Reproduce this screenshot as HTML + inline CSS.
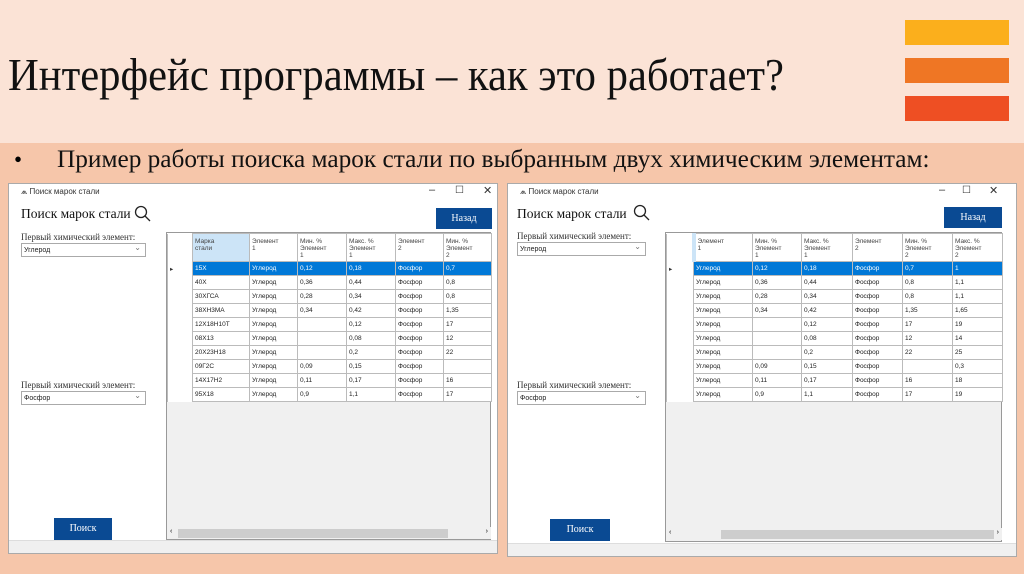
<!DOCTYPE html>
<html><head><meta charset="utf-8">
<style>
*{margin:0;padding:0;box-sizing:border-box}
body{width:1024px;height:574px;overflow:hidden;background:#F6C6AA;position:relative;font-family:"Liberation Sans",sans-serif}
.top{position:absolute;left:0;top:0;width:1024px;height:143px;background:#FBE3D6}
.bar{position:absolute;left:905px;width:104px;height:25px}
.h1{position:absolute;left:8px;top:48px;font-family:"Liberation Serif",serif;font-size:46px;white-space:nowrap;transform-origin:0 0;transform:scaleX(0.927);color:#111}
.sub{position:absolute;left:57px;top:145px;font-family:"Liberation Serif",serif;font-size:25.3px;white-space:nowrap;color:#111}
.bul{position:absolute;left:14px;top:147px;font-family:"Liberation Serif",serif;font-size:23px}
.win{position:absolute;background:#fff;border:1px solid #aaa}
.tt{position:absolute;left:12px;top:3px;font-size:8px;color:#333}
.ctl{position:absolute;top:0px;font-size:11px;color:#333}
.ttl{position:absolute;font-family:"Liberation Serif",serif;font-size:13.5px;color:#111}
.btn{position:absolute;background:#0A4A93;color:#fff;font-family:"Liberation Serif",serif;font-size:10px;text-align:center}
.lbl{position:absolute;font-family:"Liberation Serif",serif;font-size:9px;color:#333}
.cmb{position:absolute;height:14px;border:1px solid #aaa;font-size:7px;padding:3px 2px;color:#222;background:#fff}
.cmb:after{content:"⌄";position:absolute;right:4px;top:-1px;font-size:8px;color:#777}
.grid{position:absolute;background:#F0F0F0;border:1px solid #999}
table{border-collapse:collapse;table-layout:fixed;position:absolute;left:0;top:0;font-size:6.5px;color:#222;background:#fff}
td{border:1px solid #bbb;height:14px;padding:0 2px;white-space:nowrap;overflow:hidden}
tr.hd td{height:28px;vertical-align:top;padding-top:4px;line-height:7px;color:#444}
tr.sel td{background:#0078D7;color:#fff}
td.rh{background:#fff;border-top:none;border-bottom:none;color:#333}
tr.sel td.rh{background:#fff;color:#333}
.hs{position:absolute;height:12px;background:#F0F0F0}
.thumb{position:absolute;top:2px;height:9px;background:#CDCDCD}
.status{position:absolute;left:0;bottom:0;height:13px;background:#F0F0F0;border-top:1px solid #ddd}
</style></head><body>
<div class="top"></div>
<div class="bar" style="top:20px;background:#FBAF1C"></div>
<div class="bar" style="top:58px;background:#EF7624"></div>
<div class="bar" style="top:96px;background:#EE4F23"></div>
<div class="h1">Интерфейс программы – как это работает?</div>
<div class="bul">•</div>
<div class="sub">Пример работы поиска марок стали по выбранным двух химическим элементам:</div>

<!-- Window 1 -->
<div class="win" style="left:8px;top:183px;width:490px;height:371px">
  <div class="tt">⩕ Поиск марок стали</div>
  <div class="ctl" style="left:420px">–</div>
  <div class="ctl" style="left:446px;top:1px;font-size:10px">☐</div>
  <div class="ctl" style="left:474px">✕</div>
  <div class="ttl" style="left:12px;top:22px">Поиск марок стали</div>
  <svg style="position:absolute;left:125px;top:21px" width="18" height="18"><circle cx="7" cy="7" r="5.5" fill="none" stroke="#222" stroke-width="1.3"/><line x1="11" y1="11" x2="16" y2="16" stroke="#222" stroke-width="1.3"/></svg>
  <div class="btn" style="left:427px;top:24px;width:56px;height:21px;line-height:21px">Назад</div>
  <div class="lbl" style="left:12px;top:48px">Первый химический элемент:</div>
  <div class="cmb" style="left:12px;top:59px;width:125px">Углерод</div>
  <div class="lbl" style="left:12px;top:196px">Первый химический элемент:</div>
  <div class="cmb" style="left:12px;top:207px;width:125px">Фосфор</div>
  <div class="btn" style="left:45px;top:334px;width:58px;height:22px;line-height:22px">Поиск</div>
  <div class="grid" style="left:157px;top:48px;width:325px;height:308px">
    <table style="width:324px">
      <colgroup><col style="width:25px"><col style="width:57px"><col style="width:48px"><col style="width:49px"><col style="width:49px"><col style="width:48px"><col style="width:48px"></colgroup>
      <tr class="hd"><td class="rh"></td><td style="background:#CCE4F7">Марка<br>стали</td><td>Элемент<br>1</td><td>Мин. %<br>Элемент<br>1</td><td>Макс. %<br>Элемент<br>1</td><td>Элемент<br>2</td><td>Мин. %<br>Элемент<br>2</td></tr>
      <tr class="sel"><td class="rh">▸</td><td>15Х</td><td>Углерод</td><td>0,12</td><td>0,18</td><td>Фосфор</td><td>0,7</td></tr>
      <tr><td class="rh"></td><td>40Х</td><td>Углерод</td><td>0,36</td><td>0,44</td><td>Фосфор</td><td>0,8</td></tr>
      <tr><td class="rh"></td><td>30ХГСА</td><td>Углерод</td><td>0,28</td><td>0,34</td><td>Фосфор</td><td>0,8</td></tr>
      <tr><td class="rh"></td><td>38ХН3МА</td><td>Углерод</td><td>0,34</td><td>0,42</td><td>Фосфор</td><td>1,35</td></tr>
      <tr><td class="rh"></td><td>12Х18Н10Т</td><td>Углерод</td><td></td><td>0,12</td><td>Фосфор</td><td>17</td></tr>
      <tr><td class="rh"></td><td>08Х13</td><td>Углерод</td><td></td><td>0,08</td><td>Фосфор</td><td>12</td></tr>
      <tr><td class="rh"></td><td>20Х23Н18</td><td>Углерод</td><td></td><td>0,2</td><td>Фосфор</td><td>22</td></tr>
      <tr><td class="rh"></td><td>09Г2С</td><td>Углерод</td><td>0,09</td><td>0,15</td><td>Фосфор</td><td></td></tr>
      <tr><td class="rh"></td><td>14Х17Н2</td><td>Углерод</td><td>0,11</td><td>0,17</td><td>Фосфор</td><td>16</td></tr>
      <tr><td class="rh"></td><td>95Х18</td><td>Углерод</td><td>0,9</td><td>1,1</td><td>Фосфор</td><td>17</td></tr>
    </table>
    <div class="hs" style="left:0;top:294px;width:324px"><span style="position:absolute;left:3px;top:1px;font-size:7px">‹</span><div class="thumb" style="left:11px;width:270px"></div><span style="position:absolute;right:3px;top:1px;font-size:7px">›</span></div>
  </div>
  <div class="status" style="width:488px"></div>
</div>

<!-- Window 2 -->
<div class="win" style="left:507px;top:183px;width:510px;height:374px">
  <div class="tt">⩕ Поиск марок стали</div>
  <div class="ctl" style="left:431px">–</div>
  <div class="ctl" style="left:454px;top:1px;font-size:10px">☐</div>
  <div class="ctl" style="left:481px">✕</div>
  <div class="ttl" style="left:9px;top:22px">Поиск марок стали</div>
  <svg style="position:absolute;left:125px;top:20px" width="18" height="18"><circle cx="7" cy="7" r="5.5" fill="none" stroke="#222" stroke-width="1.3"/><line x1="11" y1="11" x2="16" y2="16" stroke="#222" stroke-width="1.3"/></svg>
  <div class="btn" style="left:436px;top:23px;width:58px;height:21px;line-height:21px">Назад</div>
  <div class="lbl" style="left:9px;top:47px">Первый химический элемент:</div>
  <div class="cmb" style="left:9px;top:58px;width:129px">Углерод</div>
  <div class="lbl" style="left:9px;top:196px">Первый химический элемент:</div>
  <div class="cmb" style="left:9px;top:207px;width:129px">Фосфор</div>
  <div class="btn" style="left:42px;top:335px;width:60px;height:22px;line-height:22px">Поиск</div>
  <div class="grid" style="left:157px;top:48px;width:337px;height:310px">
    <table style="width:336px">
      <colgroup><col style="width:27px"><col style="width:59px"><col style="width:49px"><col style="width:51px"><col style="width:50px"><col style="width:50px"><col style="width:50px"></colgroup>
      <tr class="hd"><td class="rh" style="background:#fff;border-right:4px solid #CCE4F7"></td><td>Элемент<br>1</td><td>Мин. %<br>Элемент<br>1</td><td>Макс. %<br>Элемент<br>1</td><td>Элемент<br>2</td><td>Мин. %<br>Элемент<br>2</td><td>Макс. %<br>Элемент<br>2</td></tr>
      <tr class="sel"><td class="rh">▸</td><td>Углерод</td><td>0,12</td><td>0,18</td><td>Фосфор</td><td>0,7</td><td>1</td></tr>
      <tr><td class="rh"></td><td>Углерод</td><td>0,36</td><td>0,44</td><td>Фосфор</td><td>0,8</td><td>1,1</td></tr>
      <tr><td class="rh"></td><td>Углерод</td><td>0,28</td><td>0,34</td><td>Фосфор</td><td>0,8</td><td>1,1</td></tr>
      <tr><td class="rh"></td><td>Углерод</td><td>0,34</td><td>0,42</td><td>Фосфор</td><td>1,35</td><td>1,65</td></tr>
      <tr><td class="rh"></td><td>Углерод</td><td></td><td>0,12</td><td>Фосфор</td><td>17</td><td>19</td></tr>
      <tr><td class="rh"></td><td>Углерод</td><td></td><td>0,08</td><td>Фосфор</td><td>12</td><td>14</td></tr>
      <tr><td class="rh"></td><td>Углерод</td><td></td><td>0,2</td><td>Фосфор</td><td>22</td><td>25</td></tr>
      <tr><td class="rh"></td><td>Углерод</td><td>0,09</td><td>0,15</td><td>Фосфор</td><td></td><td>0,3</td></tr>
      <tr><td class="rh"></td><td>Углерод</td><td>0,11</td><td>0,17</td><td>Фосфор</td><td>16</td><td>18</td></tr>
      <tr><td class="rh"></td><td>Углерод</td><td>0,9</td><td>1,1</td><td>Фосфор</td><td>17</td><td>19</td></tr>
    </table>
    <div class="hs" style="left:0;top:295px;width:336px"><span style="position:absolute;left:3px;top:1px;font-size:7px">‹</span><div class="thumb" style="left:55px;width:273px"></div><span style="position:absolute;right:3px;top:1px;font-size:7px">›</span></div>
  </div>
  <div class="status" style="width:508px"></div>
</div>
</body></html>
